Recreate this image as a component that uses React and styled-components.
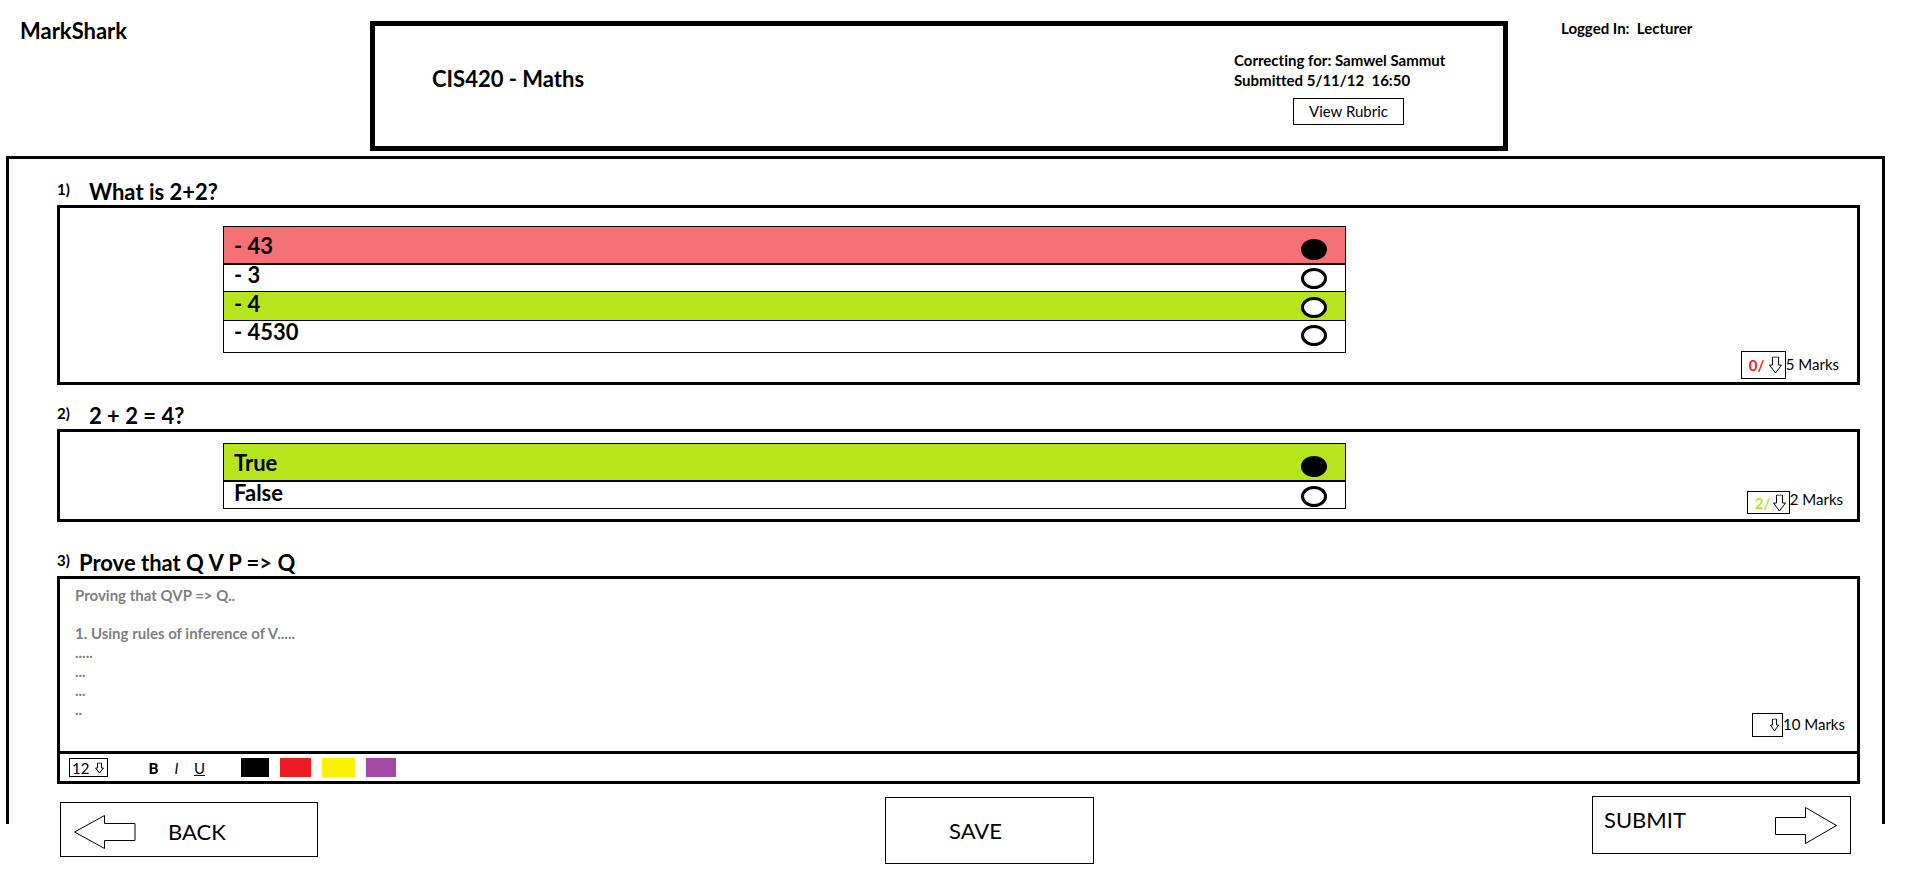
import React from "react";
import styled, { createGlobalStyle } from "styled-components";

const GlobalStyle = createGlobalStyle`
  * { box-sizing: border-box; }
  body {
    margin: 0;
    background: #fff;
    color: #000;
    font-family: Lato, "Open Sans", "Liberation Sans", sans-serif;
    font-variant-ligatures: none;
  }
  h1, h2, p, fieldset { margin: 0; padding: 0; border: 0; }
  button, select, textarea, input { font-family: inherit; font-variant-ligatures: inherit; color: inherit; border-radius: 0; margin: 0; }
`;

const red = "#ed1c24";
const lime = "#b5e61d";
const rose = "#f47176";

const Page = styled.div`
  padding-bottom: 9px;
`;

const Header = styled.header`
  display: grid;
  grid-template-columns: 370fr 1138fr 406fr;
  align-items: start;
  padding: 17px 0 5px;
`;

const Brand = styled.h1`
  padding: 2px 0 0 20px;
  font-size: 22px;
  line-height: 24px;
`;

const AssignmentBox = styled.section`
  display: flex;
  justify-content: space-between;
  min-height: 130px;
  margin-top: 4px;
  padding-left: 57px;
  border: 5px solid #000;
`;

const CourseTitle = styled.h2`
  padding-top: 40px;
  font-size: 22px;
  line-height: 26px;
`;

const Submission = styled.div`
  width: 269px;
  padding-top: 24px;
  font-size: 15px;
  line-height: 20px;
  font-weight: 700;
  white-space: pre;
`;

const RubricButton = styled.button`
  display: block;
  width: 111px;
  height: 27px;
  margin: 8px 0 0 59px;
  padding: 0 0 2px;
  border: 1px solid #000;
  background: #fff;
  font-size: 15px;
`;

const Login = styled.p`
  padding: 1px 0 0 53px;
  font-size: 15px;
  line-height: 20px;
  font-weight: 700;
  white-space: pre;
`;

const Frame = styled.main`
  margin: 0 29px 0 6px;
  padding: 0 22px 40px 48px;
  border: 3px solid #000;
  border-bottom: 0;
`;

const Heading = styled.h2`
  display: flex;
  align-items: flex-start;
  padding-top: ${(p) => p.$above}px;
  font-size: 22px;
  line-height: 26px;
`;

const Ordinal = styled.span`
  width: ${(p) => p.$width}px;
  font-size: 15px;
  line-height: 20px;
`;

const Panel = styled.div`
  border: 3px solid #000;
`;

const ChoicePanel = styled(Panel)`
  display: grid;
  grid-template-columns: 163fr 1123fr 511fr;
  min-height: ${(p) => p.$height}px;
`;

const Choices = styled.fieldset`
  grid-column: 2;
  align-self: start;
  margin-top: ${(p) => p.$top}px;
  border: 1px solid #000;
`;

const Choice = styled.label`
  display: flex;
  justify-content: space-between;
  align-items: flex-start;
  height: ${(p) => p.$height}px;
  padding: ${(p) => p.$lead}px 18px 0 10px;
  background: ${(p) => p.$tone || "#fff"};
  font-size: 22px;
  line-height: 20px;
  font-weight: 700;

  & + & { border-top: 1px solid #000; }
  &:first-of-type { border-bottom: 1px solid #000; }
`;

const Radio = styled.input`
  appearance: none;
  width: 26px;
  height: 21px;
  margin-top: 3px;
  border: 3px solid #000;
  border-radius: 50%;
  background: #fff;

  &:checked { background: #000; }
`;

const Marks = styled.label`
  display: flex;
  align-items: flex-start;
  align-self: end;
  justify-self: end;
  flex: none;
  margin: 0 ${(p) => p.$right}px ${(p) => p.$bottom}px 0;
  font-size: 15px;
  line-height: ${(p) => p.$line}px;
`;

const Picker = styled.span`
  position: relative;
  display: block;
  width: ${(p) => p.$width}px;
  height: ${(p) => p.$height}px;

  svg {
    position: absolute;
    right: 4px;
    top: 50%;
    transform: translateY(-50%);
    pointer-events: none;
  }
`;

const PickerSelect = styled.select`
  appearance: none;
  display: block;
  width: 100%;
  height: 100%;
  padding: 0 0 0 ${(p) => p.$inset}px;
  border: 1px solid #000;
  background: #fff;
  color: ${(p) => p.$color || "#000"};
  font-size: 15px;
  font-weight: ${(p) => (p.$color ? 700 : 400)};
`;

const EditorBody = styled.div`
  display: flex;
  min-height: 172px;
`;

const Answer = styled.textarea`
  flex: 1;
  padding: 7px 15px;
  border: 0;
  outline: 0;
  resize: none;
  background: transparent;
  color: #7f7f7f;
  font-size: 15px;
  line-height: 19px;
  font-weight: 700;
`;

const Toolbar = styled.div`
  display: flex;
  align-items: center;
  height: 30px;
  padding-left: 9px;
  border-top: 3px solid #000;
`;

const FormatGroup = styled.div`
  display: flex;
  gap: 8px;
  margin: 0 34px 0 38px;
`;

const FormatButton = styled.button`
  width: 15px;
  padding: 0;
  border: 0;
  background: none;
  font-size: 15px;
  font-weight: ${(p) => (p.$bold ? 900 : 400)};
  font-style: ${(p) => (p.$italic ? "italic" : "normal")};
  text-decoration: ${(p) => (p.$underline ? "underline" : "none")};
`;

const Swatches = styled.div`
  display: flex;
  gap: 11px;
`;

const Swatch = styled.button`
  width: ${(p) => p.$width}px;
  height: 19px;
  padding: 0;
  border: 0;
  background: ${(p) => p.$color};
`;

const Footer = styled.footer`
  display: grid;
  grid-template-columns: 258fr 567fr 209fr 498fr 259fr;
  align-items: start;
  margin-top: -28px;
  padding: 0 63px 0 60px;
`;

const ActionButton = styled.button`
  display: flex;
  align-items: center;
  grid-column: ${(p) => p.$column};
  height: ${(p) => p.$height}px;
  margin-top: ${(p) => p.$top}px;
  padding: ${(p) => p.$pad};
  border: 1px solid #000;
  background: #fff;
  font-size: 22px;
  line-height: 24px;
`;

const BackArrow = styled.svg`
  margin-right: 32px;
`;

const SubmitLabel = styled.span`
  flex: 1;
  padding-bottom: 10px;
  text-align: left;
`;

function DownArrow({ width, height }) {
  const w = width - 1;
  const h = height - 1;
  const a = Math.round(w * 0.27);
  const neck = Math.round(h * 0.53);
  return (
    <svg width={width} height={height} aria-hidden="true">
      <path
        d={`M${a} 0H${w - a}V${neck}H${w}L${w / 2} ${h}L0 ${neck}H${a}Z`}
        transform="translate(.5 .5)"
        fill="#fff"
        stroke="#000"
      />
    </svg>
  );
}

function MarkPicker({ label, value, color, width, height, line, right, bottom, arrow }) {
  return (
    <Marks $right={right} $bottom={bottom} $line={line}>
      <Picker $width={width} $height={height}>
        <PickerSelect $inset={7} $color={color} defaultValue={value}>
          <option value={value}>{value}</option>
        </PickerSelect>
        <DownArrow {...arrow} />
      </Picker>
      {label}
    </Marks>
  );
}

function Question({ number, title, above, indent = 32 }) {
  return (
    <Heading $above={above}>
      <Ordinal $width={indent}>{number})</Ordinal>
      {title}
    </Heading>
  );
}

function ChoiceList({ name, top, items }) {
  return (
    <Choices $top={top} aria-label={name}>
      {items.map((item) => (
        <Choice key={item.text} $height={item.height} $lead={item.lead} $tone={item.tone}>
          {item.text}
          <Radio type="radio" name={name} defaultChecked={item.checked} />
        </Choice>
      ))}
    </Choices>
  );
}

const sumChoices = [
  { text: "- 43", height: 37, lead: 9, tone: rose, checked: true },
  { text: "- 3", height: 27, lead: 0 },
  { text: "- 4", height: 29, lead: 2, tone: lime },
  { text: "- 4530", height: 32, lead: 1 },
];

const truthChoices = [
  { text: "True", height: 37, lead: 9, tone: lime, checked: true },
  { text: "False", height: 27, lead: 1 },
];

const palette = [
  { name: "Black", color: "#000", width: 28 },
  { name: "Red", color: red, width: 31 },
  { name: "Yellow", color: "#fff200", width: 33 },
  { name: "Purple", color: "#a349a4", width: 30 },
];

const answerText = `Proving that QVP => Q..

1. Using rules of inference of V.....
.....
...
...
..`;

export default function App() {
  return (
    <Page>
      <GlobalStyle />
      <Header>
        <Brand>MarkShark</Brand>
        <AssignmentBox>
          <CourseTitle>CIS420 - Maths</CourseTitle>
          <Submission>
            <p>Correcting for: Samwel Sammut</p>
            <p>{"Submitted 5/11/12  16:50"}</p>
            <RubricButton type="button">View Rubric</RubricButton>
          </Submission>
        </AssignmentBox>
        <Login>{"Logged In:  Lecturer"}</Login>
      </Header>

      <Frame>
        <Question number={1} title="What is 2+2?" above={20} />
        <ChoicePanel $height={180}>
          <ChoiceList name="What is 2+2?" top={18} items={sumChoices} />
          <MarkPicker label="5 Marks" value="0/" color={red} width={45} height={28} line={26} right={18} bottom={3} arrow={{ width: 13, height: 17 }} />
        </ChoicePanel>

        <Question number={2} title="2 + 2 = 4?" above={18} />
        <ChoicePanel $height={93}>
          <ChoiceList name="2 + 2 = 4?" top={11} items={truthChoices} />
          <MarkPicker label="2 Marks" value="2/" color={lime} width={43} height={23} line={16} right={14} bottom={5} arrow={{ width: 13, height: 17 }} />
        </ChoicePanel>

        <Question number={3} title="Prove that Q V P => Q" above={28} indent={22} />
        <Panel>
          <EditorBody>
            <Answer aria-label="Answer" defaultValue={answerText} spellCheck={false} />
            <MarkPicker label="10 Marks" value="" width={31} height={24} line={22} right={12} bottom={14} arrow={{ width: 9, height: 13 }} />
          </EditorBody>
          <Toolbar>
            <Picker $width={39} $height={19}>
              <PickerSelect $inset={2} defaultValue="12" aria-label="Font size">
                <option>12</option>
              </PickerSelect>
              <DownArrow width={9} height={11} />
            </Picker>
            <FormatGroup>
              <FormatButton type="button" $bold>B</FormatButton>
              <FormatButton type="button" $italic>I</FormatButton>
              <FormatButton type="button" $underline>U</FormatButton>
            </FormatGroup>
            <Swatches>
              {palette.map((c) => (
                <Swatch key={c.name} type="button" aria-label={c.name} $color={c.color} $width={c.width} />
              ))}
            </Swatches>
          </Toolbar>
        </Panel>
      </Frame>

      <Footer>
        <ActionButton type="button" $column={1} $height={55} $top={6} $pad="4px 0 0 13px">
          <BackArrow width="62" height="34" aria-hidden="true">
            <path d="M.5 17L30.5 .5V8.5H61V25.5H30.5V33.5Z" fill="#fff" stroke="#000" />
          </BackArrow>
          BACK
        </ActionButton>
        <ActionButton type="button" $column={3} $height={67} $top={1} $pad="0 0 0 63px">
          SAVE
        </ActionButton>
        <ActionButton type="button" $column={5} $height={58} $top={0} $pad="0 13px 0 11px">
          <SubmitLabel>SUBMIT</SubmitLabel>
          <svg width="62" height="37" aria-hidden="true">
            <path d="M.5 10.5H30.5V.5L61.5 18.5L30.5 36.5V27.5H.5Z" fill="#fff" stroke="#000" />
          </svg>
        </ActionButton>
      </Footer>
    </Page>
  );
}
